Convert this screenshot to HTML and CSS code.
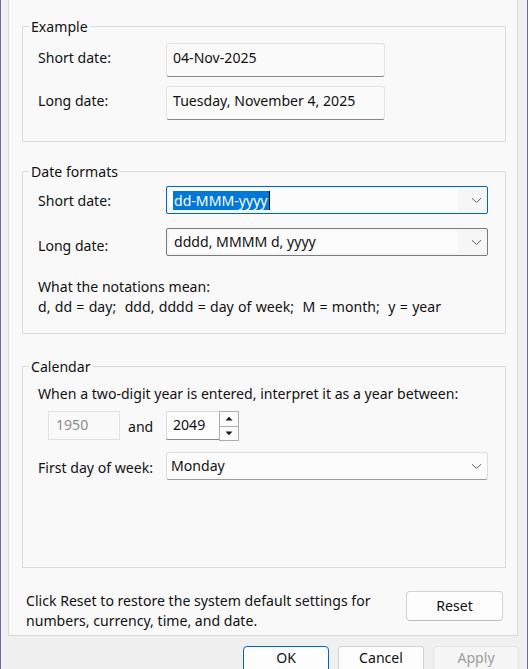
FILE: index.html
```html
<!DOCTYPE html>
<html>
<head>
<meta charset="utf-8">
<link rel="stylesheet" href="styles.css">
</head>
<body>
<div class="window">
  <div class="panel">
    <fieldset class="group g-example">
      <legend>Example</legend>
      <div class="ex-grid">
        <span class="lbl">Short date:</span>
        <div class="textbox">04-Nov-2025</div>
        <span class="lbl">Long date:</span>
        <div class="textbox">Tuesday, November 4, 2025</div>
      </div>
    </fieldset>

    <fieldset class="group g-formats">
      <legend>Date formats</legend>
      <div class="fmt-grid">
        <span class="lbl lbl-short">Short date:</span>
        <div class="combo focused">
          <div class="combo-field"><span class="sel">dd-MMM-yyyy</span><span class="caret"></span></div>
          <svg class="chev" width="11" height="7" viewBox="0 0 11 7"><path d="M1 1.2 L5.5 5.5 L10 1.2" fill="none" stroke="#5f5f5f" stroke-width="1"/></svg>
        </div>
        <span class="lbl lbl-long">Long date:</span>
        <div class="combo dark">
          <div class="combo-field">dddd, MMMM d, yyyy</div>
          <svg class="chev" width="11" height="7" viewBox="0 0 11 7"><path d="M1 1.2 L5.5 5.5 L10 1.2" fill="none" stroke="#5f5f5f" stroke-width="1"/></svg>
        </div>
      </div>
      <p class="notes">What the notations mean:<br><span class="spaced">d, dd = day;&nbsp; ddd, dddd = day of week;&nbsp; M = month;&nbsp; y = year</span></p>
    </fieldset>

    <fieldset class="group g-calendar">
      <legend>Calendar</legend>
      <p class="cal-line">When a two-digit year is entered, interpret it as a year between:</p>
      <div class="year-row">
        <div class="yearbox disabled">1950</div>
        <span class="and">and</span>
        <div class="yearbox active">2049</div>
        <div class="spin">
          <div class="spin-btn"><svg width="8" height="5" viewBox="0 0 8 5"><path d="M0.5 4.5 L4 0.8 L7.5 4.5 Z" fill="#1a1a1a"/></svg></div>
          <div class="spin-btn"><svg width="8" height="5" viewBox="0 0 8 5"><path d="M0.5 0.5 L4 4.2 L7.5 0.5 Z" fill="#1a1a1a"/></svg></div>
        </div>
      </div>
      <div class="week-row">
        <span class="lbl lbl-week">First day of week:</span>
        <div class="combo light">
          <div class="combo-text">Monday</div>
          <svg class="chev" width="11" height="7" viewBox="0 0 11 7"><path d="M1 1.2 L5.5 5.5 L10 1.2" fill="none" stroke="#5f5f5f" stroke-width="1"/></svg>
        </div>
      </div>
    </fieldset>

    <div class="footer">
      <p class="reset-text">Click Reset to restore the system default settings for<br>numbers, currency, time, and date.</p>
      <button class="btn reset">Reset</button>
    </div>
  </div>

  <div class="buttons">
    <button class="btn ok">OK</button>
    <button class="btn">Cancel</button>
    <button class="btn disabled">Apply</button>
  </div>
</div>
</body>
</html>
```

FILE: styles.css
```css
html, body {
  margin: 0;
  padding: 0;
}
body {
  width: 528px;
  height: 669px;
  overflow: hidden;
  background: #f0f0f0;
  font-family: "Noto Sans", "Open Sans", sans-serif;
  font-size: 14.1px;
  line-height: 20px;
  color: #111111;
}
.window {
  box-sizing: border-box;
  width: 528px;
  height: 669px;
  border-left: 1px solid #6f66b6;
  border-right: 1px solid #6f66b6;
}
.panel {
  box-sizing: border-box;
  margin-left: 7px;
  width: 510px;
  height: 636px;
  background: #f9f9f9;
  border: 1px solid #dadada;
  border-top: none;
  padding-top: 16px;
}
.group {
  box-sizing: border-box;
  margin: 0 0 0 13px;
  width: 484px;
  padding: 0;
  border: 1px solid #dcdcdc;
  min-width: 0;
}
.group legend {
  margin-left: 6px;
  padding: 1px 2px 0;
  line-height: 19px;
}
.g-formats { margin-top: 19px; }
.g-calendar { margin-top: 22px; }

.lbl { line-height: 20px; }

/* Example */
.ex-grid {
  display: grid;
  grid-template-columns: 128px 219px;
  row-gap: 9px;
  padding: 7px 15px 21px;
  align-items: start;
}
.ex-grid .lbl { padding-top: 5px; }
.textbox {
  box-sizing: border-box;
  height: 34px;
  padding: 4px 6px 0;
  background: #fbfbfb;
  border: 1px solid #e3e3e3;
  border-bottom-color: #868686;
  border-radius: 3px;
  white-space: nowrap;
}

/* Date formats */
.fmt-grid {
  display: grid;
  grid-template-columns: 128px 322px;
  row-gap: 14px;
  padding: 5px 15px 0;
  align-items: start;
}
.lbl-short { margin-top: 5px; }
.lbl-long { margin-top: 8px; }
.combo {
  box-sizing: border-box;
  height: 28px;
  display: flex;
  align-items: center;
  background: #f6f6f6;
  border: 1px solid #d6d6d6;
  border-radius: 2px;
}
.combo.focused { border-color: #0067c0; }
.combo.dark { border-color: #7a7a7a; }
.combo.light {
  background: #fcfcfc;
  border-color: #dcdcdc;
  border-bottom-color: #9a9a9a;
  border-radius: 3px;
}
.combo-field {
  flex: 0 0 auto;
  width: 289px;
  height: 22px;
  margin-left: 2px;
  padding-left: 5px;
  box-sizing: border-box;
  background: #fcfcfc;
  line-height: 22px;
  display: flex;
  align-items: center;
  white-space: nowrap;
}
.combo-text {
  flex: 1;
  padding-left: 4px;
  white-space: nowrap;
}
.chev {
  margin-left: auto;
  margin-right: 5px;
}
.sel {
  background: #0078d7;
  color: #ffffff;
  line-height: 19px;
  padding: 0 1px;
  margin-left: -1px;
}
.caret {
  display: inline-block;
  width: 1px;
  height: 19px;
  background: #000;
}
.notes {
  margin: 21px 0 0;
  padding: 0 15px 16px;
  line-height: 20px;
}
.spaced { word-spacing: 0.6px; }

/* Calendar */
.cal-line {
  margin: 0;
  padding: 8px 15px 0;
}
.year-row {
  display: flex;
  align-items: flex-start;
  margin-top: 7px;
  padding-left: 25px;
}
.yearbox {
  box-sizing: border-box;
  height: 29px;
  padding: 3px 7px 0;
}
.yearbox.disabled {
  width: 72px;
  color: #8b8b8b;
  border: 1px solid #e1e1e1;
  background: #f9f9f9;
}
.and {
  margin: 6px 0 0 8px;
  width: 38px;
}
.yearbox.active {
  width: 53px;
  padding-left: 6px;
  background: #fdfdfd;
  border: 1px solid #dcdcdc;
  border-bottom-color: #8a8a8a;
  border-right: none;
}
.spin {
  box-sizing: border-box;
  width: 20px;
  height: 30px;
  border: 1px solid #adadad;
  display: flex;
  flex-direction: column;
  background: #f3f3f3;
}
.spin-btn {
  flex: 1;
  display: flex;
  align-items: center;
  justify-content: center;
  background: #fbfbfb;
}
.spin-btn + .spin-btn { border-top: 1px solid #adadad; }
.week-row {
  display: grid;
  grid-template-columns: 128px 322px;
  padding: 0 15px 87px;
  margin-top: 11px;
  align-items: start;
}
.lbl-week { margin-top: 6px; }

/* footer */
.footer {
  display: flex;
  align-items: flex-start;
  justify-content: space-between;
  margin-top: 23px;
  padding: 0 14px 0 17px;
}
.reset-text {
  margin: 0;
  line-height: 20px;
}
.btn {
  box-sizing: border-box;
  font-family: inherit;
  font-size: 14.1px;
  color: #111111;
  background: #fdfdfd;
  border: 1px solid #d3d3d3;
  border-bottom-color: #bdbdbd;
  border-radius: 4px;
  padding: 0;
  height: 30px;
  line-height: 26px;
}
.reset {
  width: 97px;
  margin-top: 0;
}
.buttons {
  display: flex;
  justify-content: flex-end;
  gap: 9px;
  margin-top: 10px;
  padding-right: 8px;
}
.buttons .btn {
  width: 86px;
  padding-bottom: 6px;
  line-height: 22px;
}
.btn.ok { border: 1px solid #0067c0; }
.btn.disabled {
  color: #9d9d9d;
  background: #f5f5f5;
  border-color: #e3e3e3;
}
```
